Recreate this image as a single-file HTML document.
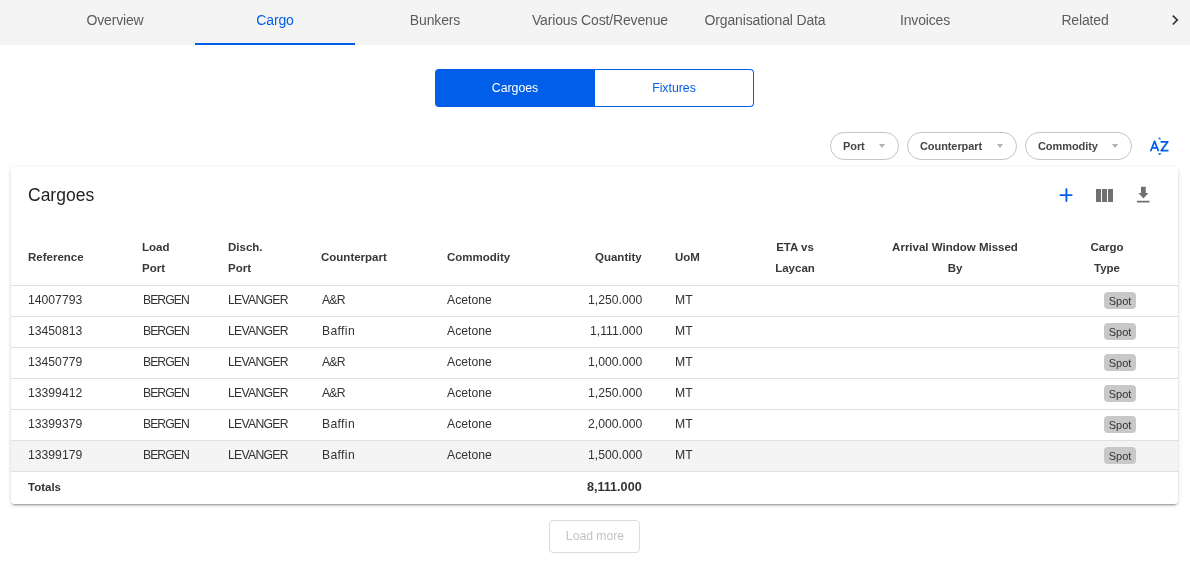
<!DOCTYPE html>
<html><head><meta charset="utf-8"><style>
html,body{margin:0;padding:0;width:1190px;height:567px;overflow:hidden;background:#fff;font-family:"Liberation Sans", sans-serif;}
.t{position:absolute;white-space:nowrap;font-variant-ligatures:none;will-change:transform;}
</style></head><body>
<div style="position:absolute;left:0px;top:0px;width:1190px;height:45px;background:#f4f4f4;"></div>
<div style="position:absolute;left:195px;top:43px;width:160px;height:2px;background:#005ee9;"></div>
<div class="t" style="top:13.15px;font-size:14px;line-height:14px;font-weight:400;color:#5c5c5c;letter-spacing:-0.15px;left:-85px;width:400px;text-align:center;">Overview</div>
<div class="t" style="top:13.15px;font-size:14px;line-height:14px;font-weight:400;color:#005ee9;letter-spacing:-0.15px;left:75px;width:400px;text-align:center;">Cargo</div>
<div class="t" style="top:13.15px;font-size:14px;line-height:14px;font-weight:400;color:#5c5c5c;letter-spacing:-0.15px;left:235px;width:400px;text-align:center;">Bunkers</div>
<div class="t" style="top:13.15px;font-size:14px;line-height:14px;font-weight:400;color:#5c5c5c;letter-spacing:-0.15px;left:400px;width:400px;text-align:center;">Various Cost/Revenue</div>
<div class="t" style="top:13.15px;font-size:14px;line-height:14px;font-weight:400;color:#5c5c5c;letter-spacing:-0.15px;left:565px;width:400px;text-align:center;">Organisational Data</div>
<div class="t" style="top:13.15px;font-size:14px;line-height:14px;font-weight:400;color:#5c5c5c;letter-spacing:-0.15px;left:725px;width:400px;text-align:center;">Invoices</div>
<div class="t" style="top:13.15px;font-size:14px;line-height:14px;font-weight:400;color:#5c5c5c;letter-spacing:-0.15px;left:885px;width:400px;text-align:center;">Related</div>
<svg style="position:absolute;left:1165.0px;top:10.4px" width="20.16" height="20.16" viewBox="0 0 24 24"><path fill="#333" d="M8.59 16.59L13.17 12 8.59 7.41 10 6l6 6-6 6-1.41-1.41z"/></svg>
<div style="position:absolute;left:435px;top:69px;width:160px;height:38px;background:#005ee9;border-radius:4px 0 0 4px;box-sizing:border-box;"></div>
<div style="position:absolute;left:595px;top:69px;width:159px;height:38px;border:1px solid #005ee9;border-left:none;border-radius:0 4px 4px 0;box-sizing:border-box;"></div>
<div class="t" style="top:81.59px;font-size:12.3px;line-height:12.3px;font-weight:400;color:#fff;left:315px;width:400px;text-align:center;">Cargoes</div>
<div class="t" style="top:81.59px;font-size:12.3px;line-height:12.3px;font-weight:400;color:#005ee9;left:474px;width:400px;text-align:center;">Fixtures</div>
<div style="position:absolute;left:830px;top:132px;width:69px;height:28px;border:1px solid #c4c4c4;border-radius:14px;box-sizing:border-box;"></div>
<div class="t" style="top:141.19px;font-size:11px;line-height:11px;font-weight:700;color:#454545;letter-spacing:-0.08px;left:842.6px;">Port</div>
<div style="position:absolute;left:879.0px;top:144px;width:0;height:0;border-left:3.6px solid transparent;border-right:3.6px solid transparent;border-top:4.0px solid #b0b0b0;"></div>
<div style="position:absolute;left:907px;top:132px;width:110px;height:28px;border:1px solid #c4c4c4;border-radius:14px;box-sizing:border-box;"></div>
<div class="t" style="top:141.19px;font-size:11px;line-height:11px;font-weight:700;color:#454545;letter-spacing:-0.08px;left:919.6px;">Counterpart</div>
<div style="position:absolute;left:997.0px;top:144px;width:0;height:0;border-left:3.6px solid transparent;border-right:3.6px solid transparent;border-top:4.0px solid #b0b0b0;"></div>
<div style="position:absolute;left:1025px;top:132px;width:107px;height:28px;border:1px solid #c4c4c4;border-radius:14px;box-sizing:border-box;"></div>
<div class="t" style="top:141.19px;font-size:11px;line-height:11px;font-weight:700;color:#454545;letter-spacing:-0.08px;left:1037.6px;">Commodity</div>
<div style="position:absolute;left:1112.0px;top:144px;width:0;height:0;border-left:3.6px solid transparent;border-right:3.6px solid transparent;border-top:4.0px solid #b0b0b0;"></div>
<svg style="position:absolute;left:1140px;top:128px" width="40" height="37" viewBox="1140 128 40 37"><g fill="none" stroke="#005ee9" stroke-width="1.75" stroke-linejoin="round"><path d="M1150.6 151.3L1154.6 141.2L1158.5 151.3M1151.8 147.9H1157.3"/><path d="M1160.6 141.8H1167.8L1161.2 150.6H1168.5"/></g><path fill="#005ee9" d="M1158.1 139.3H1161.1L1159.6 137.2ZM1157.9 153.2H1161.5L1159.7 155.2Z"/></svg>
<div style="position:absolute;left:11px;top:167px;width:1167px;height:337px;background:#fff;border-radius:4px;box-shadow:0px 3px 1px -2px rgba(0,0,0,0.2),0px 2px 2px 0px rgba(0,0,0,0.14),0px 1px 5px 0px rgba(0,0,0,0.12);"></div>
<div class="t" style="top:186.59px;font-size:17.5px;line-height:17.5px;font-weight:400;color:#222;left:27.5px;">Cargoes</div>
<svg style="position:absolute;left:1050px;top:180px" width="30" height="30" viewBox="1050 180 30 30"><path fill="none" stroke="#005ee9" stroke-width="1.9" stroke-linecap="round" d="M1060.4 195.1H1071.7M1066.4 189.3V201.0"/></svg>
<svg style="position:absolute;left:1091.5px;top:183.8px" width="24" height="24" viewBox="0 0 24 24"><path fill="#707070" d="M10 18h5V5h-5v13zm-6 0h5V5H4v13zM16 5v13h5V5h-5z"/></svg>
<svg style="position:absolute;left:1130px;top:182px" width="26" height="26" viewBox="1130 182 26 26"><path fill="#707070" d="M1141.0 186.8H1145.8V193.0H1148.4L1143.4 198.6L1138.3 193.0H1141.0ZM1136.9 200.8H1149.5V202.6H1136.9Z"/></svg>
<div class="t" style="top:252.27px;font-size:11.5px;line-height:11.5px;font-weight:700;color:#383838;left:27.5px;">Reference</div>
<div class="t" style="top:241.97px;font-size:11.5px;line-height:11.5px;font-weight:700;color:#383838;left:142px;">Load</div>
<div class="t" style="top:262.57px;font-size:11.5px;line-height:11.5px;font-weight:700;color:#383838;left:142px;">Port</div>
<div class="t" style="top:241.97px;font-size:11.5px;line-height:11.5px;font-weight:700;color:#383838;left:227.6px;">Disch.</div>
<div class="t" style="top:262.57px;font-size:11.5px;line-height:11.5px;font-weight:700;color:#383838;left:227.6px;">Port</div>
<div class="t" style="top:252.27px;font-size:11.5px;line-height:11.5px;font-weight:700;color:#383838;left:321.0px;">Counterpart</div>
<div class="t" style="top:252.27px;font-size:11.5px;line-height:11.5px;font-weight:700;color:#383838;left:447px;">Commodity</div>
<div class="t" style="top:252.27px;font-size:11.5px;line-height:11.5px;font-weight:700;color:#383838;right:548px;text-align:right;">Quantity</div>
<div class="t" style="top:252.27px;font-size:11.5px;line-height:11.5px;font-weight:700;color:#383838;left:675px;">UoM</div>
<div class="t" style="top:241.97px;font-size:11.5px;line-height:11.5px;font-weight:700;color:#383838;left:595px;width:400px;text-align:center;">ETA vs</div>
<div class="t" style="top:262.57px;font-size:11.5px;line-height:11.5px;font-weight:700;color:#383838;left:595px;width:400px;text-align:center;">Laycan</div>
<div class="t" style="top:241.97px;font-size:11.5px;line-height:11.5px;font-weight:700;color:#383838;left:755px;width:400px;text-align:center;">Arrival Window Missed</div>
<div class="t" style="top:262.57px;font-size:11.5px;line-height:11.5px;font-weight:700;color:#383838;left:755px;width:400px;text-align:center;">By</div>
<div class="t" style="top:241.97px;font-size:11.5px;line-height:11.5px;font-weight:700;color:#383838;left:907px;width:400px;text-align:center;">Cargo</div>
<div class="t" style="top:262.57px;font-size:11.5px;line-height:11.5px;font-weight:700;color:#383838;left:907px;width:400px;text-align:center;">Type</div>
<div style="position:absolute;left:11px;top:285px;width:1167px;height:1px;background:#e0e0e0;"></div>
<div style="position:absolute;left:11px;top:316px;width:1167px;height:1px;background:#e0e0e0;"></div>
<div class="t" style="top:294.17px;font-size:12.2px;line-height:12.2px;font-weight:400;color:#333;left:27.5px;">14007793</div>
<div class="t" style="top:294.17px;font-size:12.2px;line-height:12.2px;font-weight:400;color:#333;letter-spacing:-0.95px;left:142.5px;">BERGEN</div>
<div class="t" style="top:294.17px;font-size:12.2px;line-height:12.2px;font-weight:400;color:#333;letter-spacing:-0.7px;left:227.8px;">LEVANGER</div>
<div class="t" style="top:294.17px;font-size:12.2px;line-height:12.2px;font-weight:400;color:#333;letter-spacing:-0.8px;left:321.5px;">A&amp;R</div>
<div class="t" style="top:294.17px;font-size:12.2px;line-height:12.2px;font-weight:400;color:#333;left:447px;">Acetone</div>
<div class="t" style="top:294.17px;font-size:12.2px;line-height:12.2px;font-weight:400;color:#333;right:548px;text-align:right;">1,250.000</div>
<div class="t" style="top:294.17px;font-size:12.2px;line-height:12.2px;font-weight:400;color:#333;left:675px;">MT</div>
<div style="position:absolute;left:1104px;top:292px;width:32px;height:17px;background:#c8c8c8;border-radius:4px;"></div>
<div class="t" style="top:295.79px;font-size:11px;line-height:11px;font-weight:400;color:#333;left:920px;width:400px;text-align:center;">Spot</div>
<div style="position:absolute;left:11px;top:347px;width:1167px;height:1px;background:#e0e0e0;"></div>
<div class="t" style="top:325.17px;font-size:12.2px;line-height:12.2px;font-weight:400;color:#333;left:27.5px;">13450813</div>
<div class="t" style="top:325.17px;font-size:12.2px;line-height:12.2px;font-weight:400;color:#333;letter-spacing:-0.95px;left:142.5px;">BERGEN</div>
<div class="t" style="top:325.17px;font-size:12.2px;line-height:12.2px;font-weight:400;color:#333;letter-spacing:-0.7px;left:227.8px;">LEVANGER</div>
<div class="t" style="top:325.17px;font-size:12.2px;line-height:12.2px;font-weight:400;color:#333;letter-spacing:0.35px;left:321.5px;">Baffin</div>
<div class="t" style="top:325.17px;font-size:12.2px;line-height:12.2px;font-weight:400;color:#333;left:447px;">Acetone</div>
<div class="t" style="top:325.17px;font-size:12.2px;line-height:12.2px;font-weight:400;color:#333;right:548px;text-align:right;">1,111.000</div>
<div class="t" style="top:325.17px;font-size:12.2px;line-height:12.2px;font-weight:400;color:#333;left:675px;">MT</div>
<div style="position:absolute;left:1104px;top:323px;width:32px;height:17px;background:#c8c8c8;border-radius:4px;"></div>
<div class="t" style="top:326.79px;font-size:11px;line-height:11px;font-weight:400;color:#333;left:920px;width:400px;text-align:center;">Spot</div>
<div style="position:absolute;left:11px;top:378px;width:1167px;height:1px;background:#e0e0e0;"></div>
<div class="t" style="top:356.17px;font-size:12.2px;line-height:12.2px;font-weight:400;color:#333;left:27.5px;">13450779</div>
<div class="t" style="top:356.17px;font-size:12.2px;line-height:12.2px;font-weight:400;color:#333;letter-spacing:-0.95px;left:142.5px;">BERGEN</div>
<div class="t" style="top:356.17px;font-size:12.2px;line-height:12.2px;font-weight:400;color:#333;letter-spacing:-0.7px;left:227.8px;">LEVANGER</div>
<div class="t" style="top:356.17px;font-size:12.2px;line-height:12.2px;font-weight:400;color:#333;letter-spacing:-0.8px;left:321.5px;">A&amp;R</div>
<div class="t" style="top:356.17px;font-size:12.2px;line-height:12.2px;font-weight:400;color:#333;left:447px;">Acetone</div>
<div class="t" style="top:356.17px;font-size:12.2px;line-height:12.2px;font-weight:400;color:#333;right:548px;text-align:right;">1,000.000</div>
<div class="t" style="top:356.17px;font-size:12.2px;line-height:12.2px;font-weight:400;color:#333;left:675px;">MT</div>
<div style="position:absolute;left:1104px;top:354px;width:32px;height:17px;background:#c8c8c8;border-radius:4px;"></div>
<div class="t" style="top:357.79px;font-size:11px;line-height:11px;font-weight:400;color:#333;left:920px;width:400px;text-align:center;">Spot</div>
<div style="position:absolute;left:11px;top:409px;width:1167px;height:1px;background:#e0e0e0;"></div>
<div class="t" style="top:387.17px;font-size:12.2px;line-height:12.2px;font-weight:400;color:#333;left:27.5px;">13399412</div>
<div class="t" style="top:387.17px;font-size:12.2px;line-height:12.2px;font-weight:400;color:#333;letter-spacing:-0.95px;left:142.5px;">BERGEN</div>
<div class="t" style="top:387.17px;font-size:12.2px;line-height:12.2px;font-weight:400;color:#333;letter-spacing:-0.7px;left:227.8px;">LEVANGER</div>
<div class="t" style="top:387.17px;font-size:12.2px;line-height:12.2px;font-weight:400;color:#333;letter-spacing:-0.8px;left:321.5px;">A&amp;R</div>
<div class="t" style="top:387.17px;font-size:12.2px;line-height:12.2px;font-weight:400;color:#333;left:447px;">Acetone</div>
<div class="t" style="top:387.17px;font-size:12.2px;line-height:12.2px;font-weight:400;color:#333;right:548px;text-align:right;">1,250.000</div>
<div class="t" style="top:387.17px;font-size:12.2px;line-height:12.2px;font-weight:400;color:#333;left:675px;">MT</div>
<div style="position:absolute;left:1104px;top:385px;width:32px;height:17px;background:#c8c8c8;border-radius:4px;"></div>
<div class="t" style="top:388.79px;font-size:11px;line-height:11px;font-weight:400;color:#333;left:920px;width:400px;text-align:center;">Spot</div>
<div style="position:absolute;left:11px;top:440px;width:1167px;height:1px;background:#e0e0e0;"></div>
<div class="t" style="top:418.17px;font-size:12.2px;line-height:12.2px;font-weight:400;color:#333;left:27.5px;">13399379</div>
<div class="t" style="top:418.17px;font-size:12.2px;line-height:12.2px;font-weight:400;color:#333;letter-spacing:-0.95px;left:142.5px;">BERGEN</div>
<div class="t" style="top:418.17px;font-size:12.2px;line-height:12.2px;font-weight:400;color:#333;letter-spacing:-0.7px;left:227.8px;">LEVANGER</div>
<div class="t" style="top:418.17px;font-size:12.2px;line-height:12.2px;font-weight:400;color:#333;letter-spacing:0.35px;left:321.5px;">Baffin</div>
<div class="t" style="top:418.17px;font-size:12.2px;line-height:12.2px;font-weight:400;color:#333;left:447px;">Acetone</div>
<div class="t" style="top:418.17px;font-size:12.2px;line-height:12.2px;font-weight:400;color:#333;right:548px;text-align:right;">2,000.000</div>
<div class="t" style="top:418.17px;font-size:12.2px;line-height:12.2px;font-weight:400;color:#333;left:675px;">MT</div>
<div style="position:absolute;left:1104px;top:416px;width:32px;height:17px;background:#c8c8c8;border-radius:4px;"></div>
<div class="t" style="top:419.79px;font-size:11px;line-height:11px;font-weight:400;color:#333;left:920px;width:400px;text-align:center;">Spot</div>
<div style="position:absolute;left:11px;top:441px;width:1167px;height:30px;background:#f4f4f4;"></div>
<div style="position:absolute;left:11px;top:471px;width:1167px;height:1px;background:#e0e0e0;"></div>
<div class="t" style="top:449.17px;font-size:12.2px;line-height:12.2px;font-weight:400;color:#333;left:27.5px;">13399179</div>
<div class="t" style="top:449.17px;font-size:12.2px;line-height:12.2px;font-weight:400;color:#333;letter-spacing:-0.95px;left:142.5px;">BERGEN</div>
<div class="t" style="top:449.17px;font-size:12.2px;line-height:12.2px;font-weight:400;color:#333;letter-spacing:-0.7px;left:227.8px;">LEVANGER</div>
<div class="t" style="top:449.17px;font-size:12.2px;line-height:12.2px;font-weight:400;color:#333;letter-spacing:0.35px;left:321.5px;">Baffin</div>
<div class="t" style="top:449.17px;font-size:12.2px;line-height:12.2px;font-weight:400;color:#333;left:447px;">Acetone</div>
<div class="t" style="top:449.17px;font-size:12.2px;line-height:12.2px;font-weight:400;color:#333;right:548px;text-align:right;">1,500.000</div>
<div class="t" style="top:449.17px;font-size:12.2px;line-height:12.2px;font-weight:400;color:#333;left:675px;">MT</div>
<div style="position:absolute;left:1104px;top:447px;width:32px;height:17px;background:#c8c8c8;border-radius:4px;"></div>
<div class="t" style="top:450.79px;font-size:11px;line-height:11px;font-weight:400;color:#333;left:920px;width:400px;text-align:center;">Spot</div>
<div class="t" style="top:481.97px;font-size:11.5px;line-height:11.5px;font-weight:700;color:#333;left:27.5px;">Totals</div>
<div class="t" style="top:480.63px;font-size:12.6px;line-height:12.6px;font-weight:700;color:#333;right:548px;text-align:right;">8,111.000</div>
<div style="position:absolute;left:549px;top:520px;width:91px;height:33px;border:1px solid #dcdcdc;border-radius:4px;box-sizing:border-box;"></div>
<div class="t" style="top:529.67px;font-size:12.2px;line-height:12.2px;font-weight:400;color:#c4c4c4;left:394.5px;width:400px;text-align:center;">Load more</div>
</body></html>
